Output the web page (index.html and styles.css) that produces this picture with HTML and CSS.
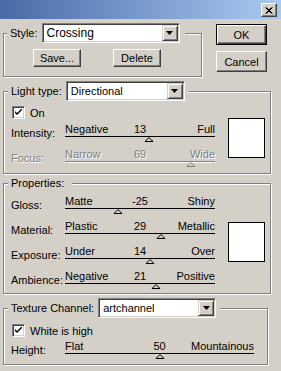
FILE: index.html
```html
<!DOCTYPE html>
<html lang="en">
<head>
    <meta charset="UTF-8">
    <meta name="viewport" content="width=device-width, initial-scale=1.0">
    <title>Lighting Effects</title>
    <link rel="stylesheet" href="styles.css">
</head>
<body>
<div class="window">
    <div class="titlebar">
        <button class="close-btn" aria-label="Close">
            <svg width="8" height="7" viewBox="0 0 8 7"><path d="M0.5 0.5 L6.5 6.5 M1.5 0.5 L7.5 6.5 M6.5 0.5 L0.5 6.5 M7.5 0.5 L1.5 6.5" stroke="#000" stroke-width="1"/></svg>
        </button>
    </div>

    <div class="dialog">
        <!-- Style + OK / Cancel -->
        <div class="top-row">
            <fieldset class="group group-style">
                <legend>
                    <span class="legend-label">Style:</span>
                    <span class="combo combo-style">
                        <span class="combo-text">Crossing</span>
                        <span class="combo-arrow"><svg width="7" height="4" viewBox="0 0 7 4"><path d="M0 0 H7 L3.5 4 Z" fill="#000"/></svg></span>
                    </span>
                </legend>
                <div class="style-buttons">
                    <button class="btn btn-small">Save...</button>
                    <button class="btn btn-small">Delete</button>
                </div>
            </fieldset>
            <div class="side-buttons">
                <button class="btn btn-side btn-default">OK</button>
                <button class="btn btn-side">Cancel</button>
            </div>
        </div>

        <!-- Light type -->
        <fieldset class="group group-light">
            <legend>
                <span class="legend-label">Light type:</span>
                <span class="combo combo-light">
                    <span class="combo-text">Directional</span>
                    <span class="combo-arrow"><svg width="7" height="4" viewBox="0 0 7 4"><path d="M0 0 H7 L3.5 4 Z" fill="#000"/></svg></span>
                </span>
            </legend>
            <div class="group-body body-light">
                <div class="rows">
                    <div class="check-row">
                        <span class="checkbox"><svg width="7" height="7" viewBox="0 0 7 7"><path d="M0 2 L2 4 L7 -1 V1 L2 6 L0 4 Z" fill="#000"/></svg></span>
                        <span>On</span>
                    </div>
                    <div class="slider-row">
                        <span class="row-label">Intensity:</span>
                        <div class="slider">
                            <div class="slider-text"><span>Negative</span><span class="slider-value">13</span><span class="slider-max">Full</span></div>
                            <div class="slider-track"></div>
                            <div class="thumb-row"><svg class="thumb" style="margin-left: 55.7%" width="9" height="5" viewBox="0 0 9 5"><path d="M4.5 0.5 L8.5 4.5 H0.5 Z"/></svg></div>
                        </div>
                    </div>
                    <div class="slider-row disabled">
                        <span class="row-label">Focus:</span>
                        <div class="slider">
                            <div class="slider-text"><span>Narrow</span><span class="slider-value">69</span><span class="slider-max">Wide</span></div>
                            <div class="slider-track"></div>
                            <div class="thumb-row"><svg class="thumb" style="margin-left: 84%" width="9" height="5" viewBox="0 0 9 5"><path d="M4.5 0.5 L8.5 4.5 H0.5 Z"/></svg></div>
                        </div>
                    </div>
                </div>
                <div class="swatch swatch-light"></div>
            </div>
        </fieldset>

        <!-- Properties -->
        <fieldset class="group group-props">
            <legend><span class="legend-label">Properties:</span></legend>
            <div class="group-body body-props">
                <div class="rows">
                    <div class="slider-row">
                        <span class="row-label">Gloss:</span>
                        <div class="slider">
                            <div class="slider-text"><span>Matte</span><span class="slider-value">-25</span><span class="slider-max">Shiny</span></div>
                            <div class="slider-track"></div>
                            <div class="thumb-row"><svg class="thumb" style="margin-left: 35.6%" width="9" height="5" viewBox="0 0 9 5"><path d="M4.5 0.5 L8.5 4.5 H0.5 Z"/></svg></div>
                        </div>
                    </div>
                    <div class="slider-row">
                        <span class="row-label">Material:</span>
                        <div class="slider">
                            <div class="slider-text"><span>Plastic</span><span class="slider-value">29</span><span class="slider-max">Metallic</span></div>
                            <div class="slider-track"></div>
                            <div class="thumb-row"><svg class="thumb" style="margin-left: 64.2%" width="9" height="5" viewBox="0 0 9 5"><path d="M4.5 0.5 L8.5 4.5 H0.5 Z"/></svg></div>
                        </div>
                    </div>
                    <div class="slider-row">
                        <span class="row-label">Exposure:</span>
                        <div class="slider">
                            <div class="slider-text"><span>Under</span><span class="slider-value">14</span><span class="slider-max">Over</span></div>
                            <div class="slider-track"></div>
                            <div class="thumb-row"><svg class="thumb" style="margin-left: 56.4%" width="9" height="5" viewBox="0 0 9 5"><path d="M4.5 0.5 L8.5 4.5 H0.5 Z"/></svg></div>
                        </div>
                    </div>
                    <div class="slider-row">
                        <span class="row-label">Ambience:</span>
                        <div class="slider">
                            <div class="slider-text"><span>Negative</span><span class="slider-value">21</span><span class="slider-max">Positive</span></div>
                            <div class="slider-track"></div>
                            <div class="thumb-row"><svg class="thumb" style="margin-left: 60.4%" width="9" height="5" viewBox="0 0 9 5"><path d="M4.5 0.5 L8.5 4.5 H0.5 Z"/></svg></div>
                        </div>
                    </div>
                </div>
                <div class="swatch swatch-props"></div>
            </div>
        </fieldset>

        <!-- Texture channel -->
        <fieldset class="group group-texture">
            <legend>
                <span class="legend-label">Texture Channel:</span>
                <span class="combo combo-texture">
                    <span class="combo-text">artchannel</span>
                    <span class="combo-arrow"><svg width="7" height="4" viewBox="0 0 7 4"><path d="M0 0 H7 L3.5 4 Z" fill="#000"/></svg></span>
                </span>
            </legend>
            <div class="group-body body-texture">
                <div class="rows">
                    <div class="check-row">
                        <span class="checkbox"><svg width="7" height="7" viewBox="0 0 7 7"><path d="M0 2 L2 4 L7 -1 V1 L2 6 L0 4 Z" fill="#000"/></svg></span>
                        <span>White is high</span>
                    </div>
                    <div class="slider-row">
                        <span class="row-label">Height:</span>
                        <div class="slider slider-wide">
                            <div class="slider-text"><span>Flat</span><span class="slider-value">50</span><span class="slider-max">Mountainous</span></div>
                            <div class="slider-track"></div>
                            <div class="thumb-row"><svg class="thumb" style="margin-left: 50.5%" width="9" height="5" viewBox="0 0 9 5"><path d="M4.5 0.5 L8.5 4.5 H0.5 Z"/></svg></div>
                        </div>
                    </div>
                </div>
            </div>
        </fieldset>
    </div>
</div>
</body>
</html>
```

FILE: styles.css
```css
body {
    margin: 0;
    background-color: #d4d0c8;
    font-family: "Liberation Sans", Arial, sans-serif;
    font-size: 11px;
    color: #000;
}
.window {
    width: 281px;
    height: 371px;
    overflow: hidden;
}
.titlebar {
    height: 19px;
    box-sizing: border-box;
    padding: 3px 4px 0 0;
    display: flex;
    justify-content: flex-end;
    align-items: flex-start;
    background: linear-gradient(to right, #4a6aa8, #a8caf0);
}
.close-btn {
    width: 16px;
    height: 14px;
    padding: 0;
    display: flex;
    align-items: center;
    justify-content: center;
    background-color: #d4d0c8;
    border: 1px solid;
    border-color: #fff #404040 #404040 #fff;
    box-shadow: inset -1px -1px #808080;
}
.close-btn svg {
    display: block;
}
.dialog {
    padding-top: 4px;
}

/* buttons */
.btn {
    font: inherit;
    color: #000;
    padding: 0;
    background-color: #d4d0c8;
    border: 1px solid;
    border-color: #fff #404040 #404040 #fff;
    box-shadow: inset -1px -1px #808080;
    box-sizing: border-box;
}
.btn-small {
    width: 48px;
    height: 18px;
}
.btn-side {
    width: 51px;
    height: 21px;
}
.btn-default {
    border: 1px solid #000;
    box-shadow: inset 1px 1px #fff, inset -1px -1px #404040, inset -2px -2px #808080;
}

/* group boxes */
.group {
    margin: 0 0 0 3px;
    padding: 0;
    min-width: 0;
    border: 1px solid #808080;
    box-shadow: 1px 1px 0 #fff, inset 1px 1px 0 #fff;
}
.group legend {
    display: flex;
    align-items: center;
    margin-left: 4px;
    padding: 0 4px 0 3px;
    background-color: #d4d0c8;
    line-height: 13px;
}
.group-style legend {
    margin-left: 3px;
    padding-right: 5px;
}
.legend-label {
    margin-right: 4px;
}

.top-row {
    display: flex;
    align-items: flex-start;
}
.group-style {
    width: 199px;
    box-sizing: border-box;
}
.style-buttons {
    display: flex;
    gap: 32px;
    padding: 6px 0 9px 29px;
}
.side-buttons {
    display: flex;
    flex-direction: column;
    gap: 6px;
    margin: 1px 0 0 14px;
}

.group-light {
    width: 268px;
    box-sizing: border-box;
    margin-top: 4px;
}
.group-props {
    width: 268px;
    box-sizing: border-box;
    margin-top: 3px;
}
.group-texture {
    width: 265px;
    box-sizing: border-box;
    margin-top: 4px;
}

/* combo boxes */
.combo {
    display: flex;
    align-items: center;
    height: 20px;
    box-sizing: border-box;
    background-color: #fff;
    border: 1px solid;
    border-color: #808080 #fff #fff #808080;
    box-shadow: inset 1px 1px #404040, inset -1px -1px #d4d0c8;
    padding: 1px;
}
.combo-text {
    flex: 1;
    padding-left: 3px;
    white-space: nowrap;
    overflow: hidden;
}
.combo-style .combo-text {
    font-size: 12px;
}
.combo-arrow {
    width: 16px;
    height: 16px;
    box-sizing: border-box;
    display: flex;
    align-items: center;
    justify-content: center;
    background-color: #d4d0c8;
    border: 1px solid;
    border-color: #d4d0c8 #404040 #404040 #d4d0c8;
    box-shadow: inset 1px 1px #fff, inset -1px -1px #808080;
}
.combo-style {
    width: 138px;
}
.combo-light {
    width: 119px;
}
.combo-texture {
    width: 118px;
}

/* group contents */
.group-body {
    display: flex;
    align-items: flex-start;
    padding-left: 7px;
}
.body-light {
    padding-top: 5px;
    padding-bottom: 5px;
}
.body-props {
    padding-top: 4px;
    padding-bottom: 3px;
}
.body-texture {
    padding-top: 6px;
    padding-bottom: 4px;
}
.check-row {
    display: flex;
    align-items: center;
    height: 13px;
    margin-left: 1px;
    margin-bottom: 3px;
}
.body-texture .check-row {
    margin-bottom: 2px;
}
.checkbox {
    width: 13px;
    height: 13px;
    box-sizing: border-box;
    margin-right: 5px;
    display: flex;
    align-items: center;
    justify-content: center;
    background-color: #fff;
    border: 1px solid;
    border-color: #808080 #fff #fff #808080;
    box-shadow: inset 1px 1px #404040, inset -1px -1px #d4d0c8;
}
.checkbox svg {
    display: block;
}

/* sliders */
.slider-row {
    display: flex;
    height: 21px;
}
.slider-row + .slider-row {
    margin-top: 4px;
}
.row-label {
    width: 54px;
    padding-top: 5px;
    line-height: 13px;
}
.slider {
    width: 150px;
}
.slider-wide {
    width: 189px;
}
.slider-text {
    display: grid;
    grid-template-columns: 1fr auto 1fr;
    line-height: 14px;
    height: 14px;
    white-space: nowrap;
}
.slider-max {
    text-align: right;
}
.slider-track {
    height: 1px;
    background-color: #000;
}
.thumb-row {
    height: 6px;
}
.thumb {
    display: block;
    transform: translateX(-50%);
    fill: none;
    stroke: #000;
}
.disabled {
    color: #808080;
    text-shadow: 1px 1px #fff;
}
.disabled .slider-track {
    background-color: #808080;
    box-shadow: 0 1px #fff;
}
.disabled .thumb {
    stroke: #808080;
}

/* colour swatches */
.swatch {
    width: 37px;
    height: 40px;
    box-sizing: border-box;
    margin-left: auto;
    margin-right: 5px;
    background-color: #fff;
    border: 1px solid #000;
}
.swatch-light {
    margin-top: 12px;
}
.swatch-props {
    margin-top: 28px;
}
```
